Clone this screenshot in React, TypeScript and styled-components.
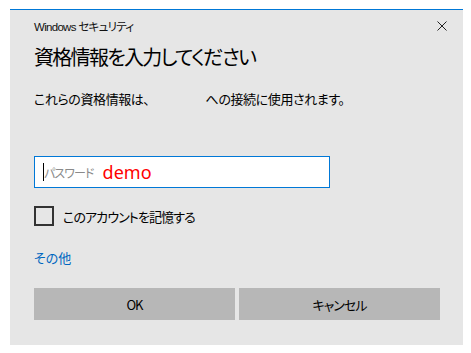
import styled, { createGlobalStyle } from "styled-components"

const Global = createGlobalStyle`
  body {
    margin: 0;
    background: #ffffff;
    font-family: "Noto Sans CJK JP", "Noto Sans", sans-serif;
    font-feature-settings: "palt";
  }
`

const Dialog = styled.div`
  margin: 9px 0 0 10px;
  width: 453px;
  height: 336px;
  box-sizing: border-box;
  background: #e6e6e6;
  border-top: 1px solid #0078d7;
  padding: 0 23px 0 24px;
  display: flex;
  flex-direction: column;
`

const TitleBar = styled.div`
  height: 32px;
  display: flex;
  align-items: center;
  justify-content: space-between;
`

const TitleText = styled.span`
  font-family: "Liberation Sans", "Noto Sans CJK JP", sans-serif;
  font-size: 11.5px;
  letter-spacing: -0.7px;
  color: #111;
`

const Close = styled.div`
  width: 10px;
  height: 10px;
  margin-right: -7px;

  svg {
    display: block;
  }
`

const Heading = styled.h1`
  margin: 1px 0 0;
  font-size: 20px;
  line-height: 28px;
  font-weight: 400;
  letter-spacing: -1.7px;
  color: #000;
`

const Message = styled.p`
  margin: 18px 0 0;
  font-size: 13px;
  line-height: 20px;
  letter-spacing: -0.4px;
  color: #000;
`

const Gap = styled.span`
  display: inline-block;
  width: 56px;
`

const Field = styled.div`
  margin-top: 47px;
  width: 296px;
  height: 32px;
  box-sizing: border-box;
  background: #fff;
  border: 1px solid #0078d7;
  display: flex;
  align-items: center;
  padding-left: 8px;
`

const Caret = styled.span`
  width: 1px;
  height: 18px;
  background: #000;
`

const Placeholder = styled.span`
  font-size: 12px;
  letter-spacing: -0.9px;
  color: #8a8a8a;
`

const Demo = styled.span`
  margin-left: 9px;
  font-family: "Noto Sans", sans-serif;
  font-size: 18px;
  color: #ff0000;
`

const CheckRow = styled.label`
  margin-top: 18px;
  display: flex;
  align-items: center;
  gap: 9px;
  font-size: 13px;
  letter-spacing: -0.9px;
  color: #000;
`

const Box = styled.span`
  width: 20px;
  height: 20px;
  box-sizing: border-box;
  border: 2px solid #333;
`

const Link = styled.a`
  margin-top: 22px;
  font-size: 13px;
  line-height: 20px;
  color: #0067c0;
  text-decoration: none;
`

const Buttons = styled.div`
  margin-top: 20px;
  display: grid;
  grid-template-columns: 1fr 1fr;
  gap: 4px;
`

const Button = styled.button`
  height: 32px;
  border: none;
  background: #b7b7b7;
  font-family: inherit;
  font-feature-settings: "palt";
  font-size: 13px;
  letter-spacing: -1px;
  color: #000;
`

export default function App() {
  return (
    <>
      <Global />
      <Dialog>
        <TitleBar>
          <TitleText>Windows セキュリティ</TitleText>
          <Close>
            <svg width="10" height="10" viewBox="0 0 10 10">
              <path d="M0.5 0.5 L9.5 9.5 M9.5 0.5 L0.5 9.5" stroke="#222" strokeWidth="1" fill="none" />
            </svg>
          </Close>
        </TitleBar>
        <Heading>資格情報を入力してください</Heading>
        <Message>
          これらの資格情報は、<Gap />への接続に使用されます。
        </Message>
        <Field>
          <Caret />
          <Placeholder>パスワード</Placeholder>
          <Demo>demo</Demo>
        </Field>
        <CheckRow>
          <Box />
          このアカウントを記憶する
        </CheckRow>
        <Link href="#">その他</Link>
        <Buttons>
          <Button>OK</Button>
          <Button>キャンセル</Button>
        </Buttons>
      </Dialog>
    </>
  )
}
